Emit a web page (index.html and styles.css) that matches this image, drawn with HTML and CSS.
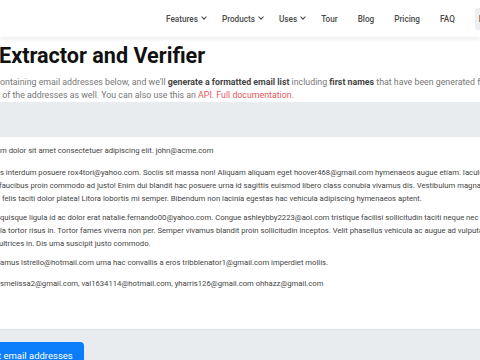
FILE: index.html
```html
<!DOCTYPE html>
<html lang="en">
<head>
    <meta charset="UTF-8">
    <meta name="viewport" content="width=device-width, initial-scale=1.0">
    <title>Email Extractor and Verifier</title>
    <link rel="stylesheet" href="styles.css">
</head>
<body>
    <header class="navbar">
        <nav class="nav-links">
            <a class="nav-item" href="#">Features <span class="caret"></span></a>
            <a class="nav-item" href="#">Products <span class="caret"></span></a>
            <a class="nav-item" href="#">Uses <span class="caret"></span></a>
            <a class="nav-item" href="#">Tour</a>
            <a class="nav-item" href="#">Blog</a>
            <a class="nav-item" href="#">Pricing</a>
            <a class="nav-item" href="#">FAQ</a>
            <a class="nav-btn" href="#">Login</a>
        </nav>
    </header>

    <div class="intro">
        <h1 class="title">Extractor and Verifier</h1>
        <p class="lead">
            <span class="line">ontaining email addresses below, and we'll <b>generate a formatted email list</b> including <b>first names</b> that have been generated from</span>
            <span class="line">&nbsp;of the addresses as well. You can also use this an <a href="#">API</a>. <a href="#">Full documentation</a>.</span>
        </p>
    </div>

    <section class="tool">
        <div class="tool-head"></div>
        <div class="input-box">
            <p class="para">m dolor sit amet consectetuer adipiscing elit. john@acme.com</p>
            <p class="para gap-1">
                <span class="line">s interdum posuere rox4tori@yahoo.com. Sociis sit massa non! Aliquam aliquam eget hoover468@gmail.com hymenaeos augue etiam. Iaculis</span>
                <span class="line cut">faucibus proin commodo ad justo! Enim dui blandit hac posuere urna id sagittis euismod libero class conubia vivamus dis. Vestibulum magna</span>
                <span class="line">&nbsp;felis taciti dolor platea! Litora lobortis mi semper. Bibendum non lacinia egestas hac vehicula adipiscing hymenaeos aptent.</span>
            </p>
            <p class="para gap-2">
                <span class="line">quisque ligula id ac dolor erat natalie.fernando00@yahoo.com. Congue ashleybby2223@aol.com tristique facilisi sollicitudin taciti neque nec</span>
                <span class="line">la tortor risus in. Tortor fames viverra non per. Semper vivamus blandit proin sollicitudin inceptos. Velit phasellus vehicula ac augue ad vulputate</span>
                <span class="line cut">ultrices in. Dis urna suscipit justo commodo.</span>
            </p>
            <p class="para gap-2">amus lstrello@hotmail.com urna hac convallis a eros tribblenator1@gmail.com imperdiet mollis.</p>
            <p class="para gap-3">smelissa2@gmail.com, val1634114@hotmail.com, yharris126@gmail.com ohhazz@gmail.com</p>
        </div>
        <div class="tool-foot">
            <button class="btn-extract">t email addresses</button>
        </div>
    </section>
</body>
</html>
```

FILE: styles.css
```css
body {
    margin: 0;
    font-family: Roboto, "Liberation Sans", sans-serif;
    background: #fff;
    color: #212529;
    overflow: hidden;
}

.navbar {
    height: 37px;
    background: #fff;
    box-shadow: 0 2px 4px rgba(0, 0, 0, 0.08);
    position: relative;
    z-index: 1;
}

.nav-links {
    display: flex;
    align-items: center;
    height: 100%;
    padding-left: 156px;
    white-space: nowrap;
}

.nav-item {
    color: #4a4a4a;
    text-decoration: none;
    font-size: 8.2px;
    font-weight: 500;
    padding: 0 10px;
    display: flex;
    align-items: center;
}

.caret {
    width: 3px;
    height: 3px;
    border-right: 1.5px solid #444;
    border-bottom: 1.5px solid #444;
    transform: rotate(45deg);
    margin: -3px -4px 0 4px;
}

.nav-btn {
    margin-left: 10px;
    background: #eceff1;
    color: #333;
    font-size: 8.2px;
    text-decoration: none;
    padding: 6px 4px;
    border-radius: 3px;
}

.intro {
    padding: 0;
    white-space: nowrap;
}

.title {
    margin: 0;
    padding-top: 4px;
    font-size: 21.6px;
    font-weight: 700;
    color: #111;
    line-height: 30px;
    margin-left: -1px;
}

.lead {
    margin: 5px 0 0 0;
    font-size: 8.8px;
    line-height: 13px;
    color: #777;
    padding-bottom: 0;
}

.lead b {
    color: #444;
}

.lead a {
    color: #e8595c;
    text-decoration: none;
}

.line {
    display: block;
    white-space: nowrap;
}

.cut {
    margin-left: -1px;
}

.tool {
    background: #e9ecef;
}

.tool-head {
    height: 35px;
}

.input-box {
    background: #fff;
    height: 193px;
    padding-top: 7px;
    box-sizing: border-box;
    font-size: 7.7px;
    line-height: 13px;
    color: #444;
    white-space: nowrap;
    border-bottom: 1px solid #dde1e5;
}

.para {
    margin: 0;
}

.gap-1 {
    margin-top: 9px;
}

.gap-2 {
    margin-top: 6px;
}

.gap-3 {
    margin-top: 8px;
}

.tool-foot {
    padding-top: 12px;
    height: 40px;
}

.btn-extract {
    display: block;
    margin-left: -6px;
    width: 90px;
    height: 30px;
    border: 0;
    border-radius: 4px;
    background: #0b7dfb;
    color: #fff;
    font-family: Roboto, "Liberation Sans", sans-serif;
    font-size: 9.5px;
    text-align: left;
    padding: 0 0 4px 4px;
}
```
